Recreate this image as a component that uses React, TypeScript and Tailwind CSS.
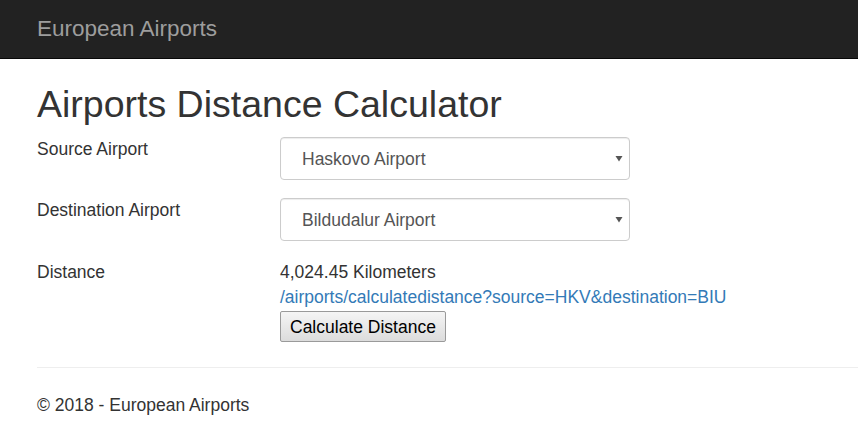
import React from "react";

function FakeSelect({ value }: { value: string }) {
  return (
    <div className="relative flex h-[43px] w-[350px] items-center rounded-[4px] border border-[#cccccc] bg-white pl-[21px] text-[17.5px] text-[#555555] shadow-[inset_0_1px_1px_rgba(0,0,0,0.075)]">
      <span>{value}</span>
      <svg className="absolute right-[6px] top-[17px]" width="8" height="7" viewBox="0 0 8 7">
        <polygon points="0.5,1 7.5,1 4,6.5" fill="#555555" />
      </svg>
    </div>
  );
}

export default function App() {
  return (
    <div className="min-h-[435px] bg-white text-[17.5px] leading-[20px] text-[#333333]" style={{ fontFamily: '"Liberation Sans", Arial, sans-serif' }}>
      <div className="flex h-[59px] items-center border-b border-[#080808] bg-[#222222] pl-[37px]">
        <span className="text-[22.5px] text-[#9d9d9d]">European Airports</span>
      </div>
      <div className="pl-[37px]">
        <h1 className="mt-[25px] text-[37.5px] leading-[40px] font-normal text-[#333333]">Airports Distance Calculator</h1>
        <div className="mt-[13px] flex items-start">
          <div className="w-[243px] pt-[2px]">Source Airport</div>
          <FakeSelect value="Haskovo Airport" />
        </div>
        <div className="mt-[18px] flex items-start">
          <div className="w-[243px] pt-[2px]">Destination Airport</div>
          <FakeSelect value="Bildudalur Airport" />
        </div>
        <div className="mt-[21px] flex items-start">
          <div className="w-[243px]">Distance</div>
          <div className="flex flex-col items-start">
            <div className="h-[20px]">4,024.45 Kilometers</div>
            <a className="mt-[5px] text-[#337ab7]" href="#">/airports/calculatedistance?source=HKV&amp;destination=BIU</a>
            <button className="mt-[4px] h-[31px] rounded-[2px] border border-[#9a9a9a] bg-gradient-to-b from-[#f5f5f5] to-[#dcdcdc] px-[9px] text-[17.5px] text-black">Calculate Distance</button>
          </div>
        </div>
        <hr className="mt-[25px] border-t border-[#eeeeee]" />
        <div className="mt-[27px]">© 2018 - European Airports</div>
      </div>
    </div>
  );
}
